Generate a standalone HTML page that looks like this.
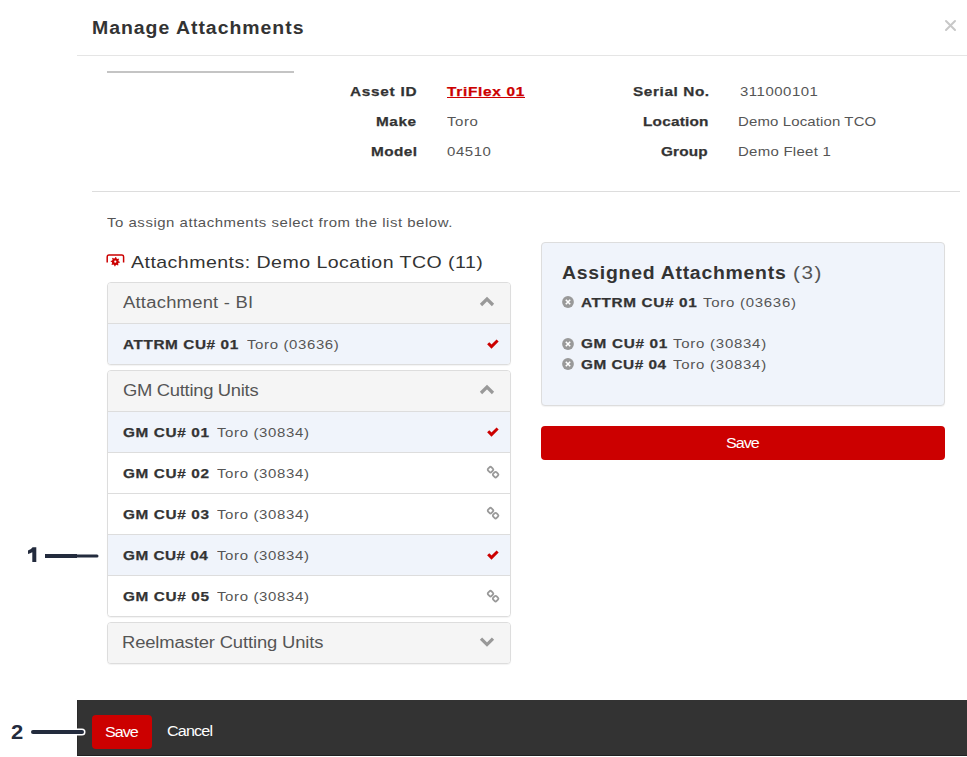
<!DOCTYPE html>
<html><head><meta charset="utf-8"><style>
*{box-sizing:border-box;margin:0;padding:0}
html,body{width:967px;height:757px;overflow:hidden;background:#fff;font-family:"Liberation Sans",sans-serif}
.a{position:absolute}
.t{position:absolute;white-space:nowrap}
.panel{position:absolute;left:107px;width:404px;border:1px solid #ddd;border-radius:4px;box-shadow:0 1px 1px rgba(0,0,0,.05);overflow:hidden;background:#fff}
.ph{height:41px;background:#f5f5f5;border-bottom:1px solid #ddd}
.row{height:41px;border-bottom:1px solid #ddd;background:#fff}
.row.sel{background:#f0f4fb}
.row.last{border-bottom:0;height:40px}
.ph.only{border-bottom:0;height:40px}
</style></head><body>
<!-- header -->
<div class="a" style="left:77px;top:55px;width:890px;height:1px;background:#e5e5e5"></div>
<svg class="a" style="left:944px;top:19px" width="13" height="13" viewBox="0 0 13 13"><path d="M2 2L11 11M11 2L2 11" stroke="#c8c8c8" stroke-width="2" stroke-linecap="round"/></svg>
<div class="a" style="left:107px;top:71px;width:187px;height:2px;background:#c4c4c4"></div>
<div class="a" style="left:92px;top:191px;width:868px;height:1px;background:#ddd"></div>
<!-- attachments icon -->
<svg class="a" style="left:100px;top:250px" width="30" height="20" viewBox="0 0 30 20">
 <path d="M7.2 12.6V6.8Q7.2 5.1 8.9 5.1H21.9Q23.6 5.1 23.6 6.8V12.6" fill="none" stroke="#cc0000" stroke-width="1.5"/>
 <g transform="translate(15.3,11.7) rotate(-5)"><path d="M3.50 0.00 L4.59 0.36 L4.37 1.42 L3.23 1.34 L2.47 2.47 L2.99 3.50 L2.09 4.10 L1.34 3.23 L0.00 3.50 L-0.36 4.59 L-1.42 4.37 L-1.34 3.23 L-2.47 2.47 L-3.50 2.99 L-4.10 2.09 L-3.23 1.34 L-3.50 0.00 L-4.59 -0.36 L-4.37 -1.42 L-3.23 -1.34 L-2.47 -2.47 L-2.99 -3.50 L-2.09 -4.10 L-1.34 -3.23 L-0.00 -3.50 L0.36 -4.59 L1.42 -4.37 L1.34 -3.23 L2.47 -2.47 L3.50 -2.99 L4.10 -2.09 L3.23 -1.34Z" fill="#cc0000"/><circle r="1.1" fill="#fff"/></g>
</svg>
<!-- panel 1 -->
<div class="panel" style="top:282px;height:83px">
 <div class="ph"></div>
 <div class="row sel last"></div>
</div>
<div class="panel" style="top:370px;height:247px">
 <div class="ph"></div>
 <div class="row sel"></div>
 <div class="row"></div>
 <div class="row"></div>
 <div class="row sel"></div>
 <div class="row last"></div>
</div>
<div class="panel" style="top:622px;height:42px">
 <div class="ph only"></div>
</div>
<!-- chevrons -->
<svg class="a" style="left:478px;top:294px" width="18" height="14" viewBox="0 0 18 14"><path d="M3 11L9 5 15 11" fill="none" stroke="#999" stroke-width="3.2"/></svg>
<svg class="a" style="left:478px;top:382px" width="18" height="14" viewBox="0 0 18 14"><path d="M3 11L9 5 15 11" fill="none" stroke="#999" stroke-width="3.2"/></svg>
<svg class="a" style="left:478px;top:634px" width="18" height="14" viewBox="0 0 18 14"><path d="M3 4.6L9 10.6 15 4.6" fill="none" stroke="#999" stroke-width="3.2"/></svg>
<svg class="a" style="left:485px;top:336.5px" width="16" height="14" viewBox="0 0 16 14"><path d="M3.2 6.2L6.5 9.6 12.6 3.5" fill="none" stroke="#cc0000" stroke-width="3"/></svg>
<svg class="a" style="left:485px;top:424.5px" width="16" height="14" viewBox="0 0 16 14"><path d="M3.2 6.2L6.5 9.6 12.6 3.5" fill="none" stroke="#cc0000" stroke-width="3"/></svg>
<svg class="a" style="left:485px;top:547.5px" width="16" height="14" viewBox="0 0 16 14"><path d="M3.2 6.2L6.5 9.6 12.6 3.5" fill="none" stroke="#cc0000" stroke-width="3"/></svg>
<svg class="a" style="left:485px;top:464px" width="16" height="16" viewBox="0 0 16 16"><g fill="none" stroke="#999" stroke-width="1.8"><rect x="3.1" y="3.2" width="4.8" height="4.8" rx="1.5" transform="rotate(45 5.5 5.6)"/><rect x="8.2" y="8.2" width="4.8" height="4.8" rx="1.5" transform="rotate(45 10.6 10.6)"/></g></svg>
<svg class="a" style="left:485px;top:505px" width="16" height="16" viewBox="0 0 16 16"><g fill="none" stroke="#999" stroke-width="1.8"><rect x="3.1" y="3.2" width="4.8" height="4.8" rx="1.5" transform="rotate(45 5.5 5.6)"/><rect x="8.2" y="8.2" width="4.8" height="4.8" rx="1.5" transform="rotate(45 10.6 10.6)"/></g></svg>
<svg class="a" style="left:485px;top:588px" width="16" height="16" viewBox="0 0 16 16"><g fill="none" stroke="#999" stroke-width="1.8"><rect x="3.1" y="3.2" width="4.8" height="4.8" rx="1.5" transform="rotate(45 5.5 5.6)"/><rect x="8.2" y="8.2" width="4.8" height="4.8" rx="1.5" transform="rotate(45 10.6 10.6)"/></g></svg>

<!-- assigned box -->
<div class="a" style="left:541px;top:242px;width:404px;height:164px;background:#f0f4fb;border:1px solid #ddd;border-radius:4px;box-shadow:0 1px 1px rgba(0,0,0,.05)"></div>
<svg class="a" style="left:561px;top:295.4px" width="14" height="14" viewBox="0 0 14 14"><circle cx="7" cy="7" r="5.9" fill="#999"/><path d="M4.8 4.8L9.2 9.2M9.2 4.8L4.8 9.2" stroke="#fff" stroke-width="1.6"/></svg>
<svg class="a" style="left:561px;top:336.5px" width="14" height="14" viewBox="0 0 14 14"><circle cx="7" cy="7" r="5.9" fill="#999"/><path d="M4.8 4.8L9.2 9.2M9.2 4.8L4.8 9.2" stroke="#fff" stroke-width="1.6"/></svg>
<svg class="a" style="left:561px;top:357.1px" width="14" height="14" viewBox="0 0 14 14"><circle cx="7" cy="7" r="5.9" fill="#999"/><path d="M4.8 4.8L9.2 9.2M9.2 4.8L4.8 9.2" stroke="#fff" stroke-width="1.6"/></svg>

<div class="a" style="left:541px;top:426px;width:404px;height:34px;background:#cc0000;border-radius:4px"></div>
<!-- footer -->
<div class="a" style="left:77px;top:700px;width:890px;height:56px;background:#333;border-left:1px solid #2a2a2a;border-bottom:1px solid #222"></div>
<div class="a" style="left:92px;top:715px;width:60px;height:34px;background:#cc0000;border-radius:4px"></div>
<!-- annotations -->
<svg class="a" style="left:0;top:540px" width="45" height="30"><path d="M32.3 7.2H36.3V21.9H32.3V12.3Q30.3 13.6 28 14V10.6Q31 9.6 32.6 7.2Z" fill="#232b3d"/></svg>
<svg class="a" style="left:0;top:540px" width="110" height="30"><path d="M45 16H77" stroke="#232b3d" stroke-width="4"/><path d="M77 16H97" stroke="#232b3d" stroke-width="3" stroke-linecap="round"/></svg>
<svg class="a" style="left:0;top:720px" width="95" height="25"><path d="M33 12H82" stroke="#fff" stroke-width="7" stroke-linecap="round"/><path d="M33 12H82" stroke="#232b3d" stroke-width="4" stroke-linecap="round"/></svg>
<div class="t" style="left:91.72px;top:19.36px;font-size:18px;line-height:18px;font-weight:700;color:#333;letter-spacing:0.908px;transform:scaleX(1.08);transform-origin:0 0;">Manage Attachments</div>
<div class="t" style="left:350.00px;top:84.70px;font-size:13px;line-height:13px;font-weight:700;color:#333;letter-spacing:0.614px;transform:scaleX(1.18);transform-origin:0 0;-webkit-text-stroke:0.25px #333;">Asset ID</div>
<div class="t" style="left:376.20px;top:114.70px;font-size:13px;line-height:13px;font-weight:700;color:#333;letter-spacing:0.480px;transform:scaleX(1.18);transform-origin:0 0;-webkit-text-stroke:0.25px #333;">Make</div>
<div class="t" style="left:370.60px;top:144.70px;font-size:13px;line-height:13px;font-weight:700;color:#333;letter-spacing:0.383px;transform:scaleX(1.18);transform-origin:0 0;-webkit-text-stroke:0.25px #333;">Model</div>
<div class="t" style="left:447.00px;top:84.70px;font-size:13px;line-height:13px;font-weight:700;color:#cc0000;letter-spacing:0.612px;transform:scaleX(1.18);transform-origin:0 0;-webkit-text-stroke:0.25px #cc0000;text-decoration:underline;">TriFlex 01</div>
<div class="t" style="left:447.00px;top:114.70px;font-size:13px;line-height:13px;font-weight:400;color:#555;letter-spacing:0.488px;transform:scaleX(1.15);transform-origin:0 0;">Toro</div>
<div class="t" style="left:447.00px;top:144.70px;font-size:13px;line-height:13px;font-weight:400;color:#555;letter-spacing:0.498px;transform:scaleX(1.15);transform-origin:0 0;">04510</div>
<div class="t" style="left:632.60px;top:84.70px;font-size:13px;line-height:13px;font-weight:700;color:#333;letter-spacing:0.505px;transform:scaleX(1.18);transform-origin:0 0;-webkit-text-stroke:0.25px #333;">Serial No.</div>
<div class="t" style="left:642.50px;top:114.70px;font-size:13px;line-height:13px;font-weight:700;color:#333;letter-spacing:0.184px;transform:scaleX(1.18);transform-origin:0 0;-webkit-text-stroke:0.25px #333;">Location</div>
<div class="t" style="left:661.40px;top:144.70px;font-size:13px;line-height:13px;font-weight:700;color:#333;letter-spacing:0.110px;transform:scaleX(1.18);transform-origin:0 0;-webkit-text-stroke:0.25px #333;">Group</div>
<div class="t" style="left:739.60px;top:84.70px;font-size:13px;line-height:13px;font-weight:400;color:#555;letter-spacing:0.450px;transform:scaleX(1.15);transform-origin:0 0;">311000101</div>
<div class="t" style="left:738.45px;top:114.70px;font-size:13px;line-height:13px;font-weight:400;color:#555;letter-spacing:0.120px;transform:scaleX(1.15);transform-origin:0 0;">Demo Location TCO</div>
<div class="t" style="left:738.45px;top:144.70px;font-size:13px;line-height:13px;font-weight:400;color:#555;letter-spacing:0.243px;transform:scaleX(1.15);transform-origin:0 0;">Demo Fleet 1</div>
<div class="t" style="left:107.00px;top:215.70px;font-size:13px;line-height:13px;font-weight:400;color:#555;letter-spacing:0.460px;transform:scaleX(1.15);transform-origin:0 0;">To assign attachments select from the list below.</div>
<div class="t" style="left:130.60px;top:253.91px;font-size:17px;line-height:17px;font-weight:400;color:#333;letter-spacing:0.401px;transform:scaleX(1.15);transform-origin:0 0;">Attachments: Demo Location TCO (11)</div>
<div class="t" style="left:122.80px;top:295.46px;font-size:16px;line-height:16px;font-weight:400;color:#555;letter-spacing:0.208px;transform:scaleX(1.15);transform-origin:0 0;">Attachment - BI</div>
<div class="t" style="left:123.30px;top:338.00px;font-size:13px;line-height:13px;font-weight:700;color:#333;letter-spacing:0.490px;transform:scaleX(1.18);transform-origin:0 0;-webkit-text-stroke:0.25px #333;">ATTRM CU# 01</div>
<div class="t" style="left:246.50px;top:338.00px;font-size:13px;line-height:13px;font-weight:400;color:#555;letter-spacing:0.554px;transform:scaleX(1.15);transform-origin:0 0;">Toro (03636)</div>
<div class="t" style="left:122.80px;top:383.26px;font-size:16px;line-height:16px;font-weight:400;color:#555;letter-spacing:-0.260px;transform:scaleX(1.15);transform-origin:0 0;">GM Cutting Units</div>
<div class="t" style="left:123.30px;top:426.00px;font-size:13px;line-height:13px;font-weight:700;color:#333;letter-spacing:0.528px;transform:scaleX(1.18);transform-origin:0 0;-webkit-text-stroke:0.25px #333;">GM CU# 01</div>
<div class="t" style="left:216.60px;top:426.00px;font-size:13px;line-height:13px;font-weight:400;color:#555;letter-spacing:0.562px;transform:scaleX(1.15);transform-origin:0 0;">Toro (30834)</div>
<div class="t" style="left:123.30px;top:467.00px;font-size:13px;line-height:13px;font-weight:700;color:#333;letter-spacing:0.528px;transform:scaleX(1.18);transform-origin:0 0;-webkit-text-stroke:0.25px #333;">GM CU# 02</div>
<div class="t" style="left:216.60px;top:467.00px;font-size:13px;line-height:13px;font-weight:400;color:#555;letter-spacing:0.562px;transform:scaleX(1.15);transform-origin:0 0;">Toro (30834)</div>
<div class="t" style="left:123.30px;top:508.00px;font-size:13px;line-height:13px;font-weight:700;color:#333;letter-spacing:0.528px;transform:scaleX(1.18);transform-origin:0 0;-webkit-text-stroke:0.25px #333;">GM CU# 03</div>
<div class="t" style="left:216.60px;top:508.00px;font-size:13px;line-height:13px;font-weight:400;color:#555;letter-spacing:0.562px;transform:scaleX(1.15);transform-origin:0 0;">Toro (30834)</div>
<div class="t" style="left:123.30px;top:549.00px;font-size:13px;line-height:13px;font-weight:700;color:#333;letter-spacing:0.403px;transform:scaleX(1.18);transform-origin:0 0;-webkit-text-stroke:0.25px #333;">GM CU# 04</div>
<div class="t" style="left:216.60px;top:549.00px;font-size:13px;line-height:13px;font-weight:400;color:#555;letter-spacing:0.562px;transform:scaleX(1.15);transform-origin:0 0;">Toro (30834)</div>
<div class="t" style="left:123.30px;top:590.00px;font-size:13px;line-height:13px;font-weight:700;color:#333;letter-spacing:0.528px;transform:scaleX(1.18);transform-origin:0 0;-webkit-text-stroke:0.25px #333;">GM CU# 05</div>
<div class="t" style="left:216.60px;top:590.00px;font-size:13px;line-height:13px;font-weight:400;color:#555;letter-spacing:0.562px;transform:scaleX(1.15);transform-origin:0 0;">Toro (30834)</div>
<div class="t" style="left:121.65px;top:635.46px;font-size:16px;line-height:16px;font-weight:400;color:#555;letter-spacing:-0.116px;transform:scaleX(1.15);transform-origin:0 0;">Reelmaster Cutting Units</div>
<div class="t" style="left:562.20px;top:263.96px;font-size:18px;line-height:18px;font-weight:700;color:#333;letter-spacing:0.671px;transform:scaleX(1.08);transform-origin:0 0;">Assigned Attachments</div>
<div class="t" style="left:793.35px;top:263.96px;font-size:18px;line-height:18px;font-weight:400;color:#555;letter-spacing:1.302px;transform:scaleX(1.15);transform-origin:0 0;">(3)</div>
<div class="t" style="left:580.50px;top:296.10px;font-size:13px;line-height:13px;font-weight:700;color:#333;letter-spacing:0.536px;transform:scaleX(1.18);transform-origin:0 0;-webkit-text-stroke:0.25px #333;">ATTRM CU# 01</div>
<div class="t" style="left:702.70px;top:296.10px;font-size:13px;line-height:13px;font-weight:400;color:#555;letter-spacing:0.649px;transform:scaleX(1.15);transform-origin:0 0;">Toro (03636)</div>
<div class="t" style="left:580.50px;top:337.20px;font-size:13px;line-height:13px;font-weight:700;color:#333;letter-spacing:0.560px;transform:scaleX(1.18);transform-origin:0 0;-webkit-text-stroke:0.25px #333;">GM CU# 01</div>
<div class="t" style="left:673.00px;top:337.20px;font-size:13px;line-height:13px;font-weight:400;color:#555;letter-spacing:0.665px;transform:scaleX(1.15);transform-origin:0 0;">Toro (30834)</div>
<div class="t" style="left:580.50px;top:357.80px;font-size:13px;line-height:13px;font-weight:700;color:#333;letter-spacing:0.435px;transform:scaleX(1.18);transform-origin:0 0;-webkit-text-stroke:0.25px #333;">GM CU# 04</div>
<div class="t" style="left:673.00px;top:357.80px;font-size:13px;line-height:13px;font-weight:400;color:#555;letter-spacing:0.665px;transform:scaleX(1.15);transform-origin:0 0;">Toro (30834)</div>
<div class="t" style="left:725.60px;top:435.95px;font-size:14px;line-height:14px;font-weight:400;color:#fff;letter-spacing:-0.853px;transform:scaleX(1.15);transform-origin:0 0;">Save</div>
<div class="t" style="left:104.80px;top:724.55px;font-size:14px;line-height:14px;font-weight:400;color:#fff;letter-spacing:-0.882px;transform:scaleX(1.15);transform-origin:0 0;">Save</div>
<div class="t" style="left:167.30px;top:724.15px;font-size:14px;line-height:14px;font-weight:400;color:#fff;letter-spacing:-0.711px;transform:scaleX(1.15);transform-origin:0 0;">Cancel</div>
<div class="t" style="left:10.90px;top:721.67px;font-size:20px;line-height:20px;font-weight:700;color:#232b3d;letter-spacing:0.000px;transform:scaleX(1.0999999999999999);transform-origin:0 0;">2</div>
</body></html>
